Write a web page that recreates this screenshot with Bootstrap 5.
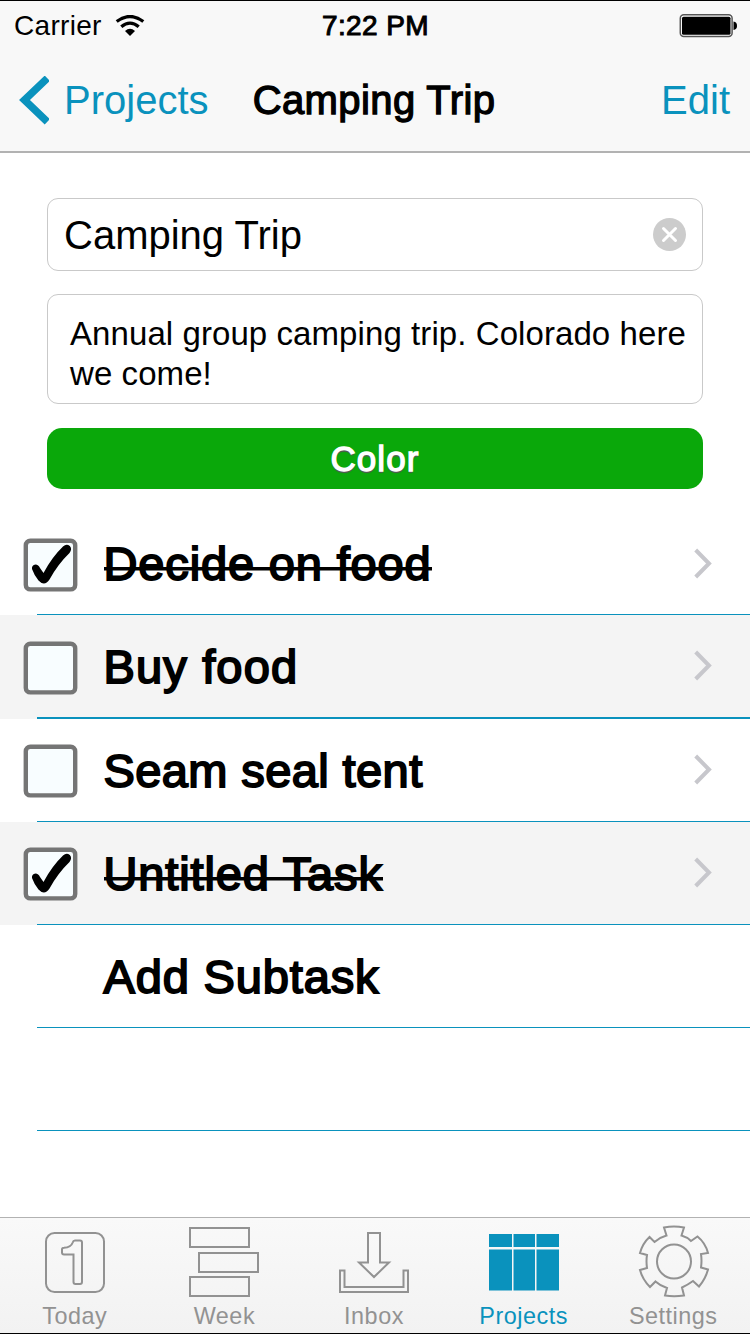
<!DOCTYPE html>
<html lang="en">
<head>
<meta charset="utf-8">
<meta name="viewport" content="width=device-width, initial-scale=1">
<title>Camping Trip</title>
<link href="https://cdn.jsdelivr.net/npm/bootstrap@5.3.0/dist/css/bootstrap.min.css" rel="stylesheet">
<style>
  :root { --tint: #0a92bd; }
  body { font-family: "Liberation Sans", Arial, sans-serif; color: #000; background: #fff; }
  svg { display: block; flex: none; }
  .screen { height: 1334px; border-top: 1px solid #000; border-bottom: 1px solid #000; overflow: hidden; }
  .top-area { height: 152px; background: #f8f8f8; border-bottom: 2px solid #b2b2b2; }
  .status { height: 49px; font-size: 28px; line-height: 49px; letter-spacing: .3px; padding: 0 13px 0 14px; }
  .side { flex: 1 1 0; }
  .medium { -webkit-text-stroke: 1.3px currentColor; }
  .clock { letter-spacing: .4px; -webkit-text-stroke-width: 1px; }
  .wifi { margin-left: 13px; }
  .title-row { height: 101px; font-size: 40px; line-height: 101px; padding: 0 20px 0 19px; }
  .title-row a { color: var(--tint); text-decoration: none; }
  .back-label { margin-left: 15px; }
  .title { letter-spacing: .4px; margin-left: -1px; }
  .form-area { padding: 45px 47px 0; }
  .field { border: 1px solid #c9c9c9; border-radius: 11px; }
  .name-field { height: 73px; font-size: 40px; line-height: 73px; padding: 0 16px 0 16px; margin-bottom: 23px; }
  .name-field span { padding-top: 2px; }
  .note-field { height: 110px; font-size: 33px; line-height: 40px; letter-spacing: .08px; padding: 19px 0 0 22px; margin-bottom: 24px; white-space: nowrap; }
  .color-btn { height: 61px; border-radius: 15px; background: #0aa80a; border: 0; color: #fff; font-size: 35px; line-height: 61px; letter-spacing: 1.1px; padding: 0; text-shadow: 0 2px 1px #555; }
  .tasks { margin-top: 23px; }
  .task { height: 103px; padding: 0 38px 0 21px; font-size: 47px; letter-spacing: .85px; background: #fff; position: relative; }
  .task:nth-child(2) { height: 104px; }
  .task:nth-child(even):nth-child(-n+4) { background: #f4f4f4; }
  .task::after { content: ""; position: absolute; left: 37px; right: 0; bottom: 0; height: 1px; background: var(--tint); }
  .task:nth-child(2)::after { height: 2px; }
  .box-icon { margin-top: 2px; }
  .task:nth-child(n+3) .box-icon { margin-top: 1px; }
  .chev-icon { margin-top: -1px; }
  .task:nth-child(n+2) .chev-icon { margin-top: -3px; }
  .task-name { margin-left: 23.5px; line-height: 60px; -webkit-text-stroke-width: 1.9px; }
  .wide { letter-spacing: 1.15px; }
  .tight { letter-spacing: .4px; }
  .done { display: inline-block; background: linear-gradient(#000, #000) 0 33px / 100% 3.5px no-repeat; }
  .tabs { height: 116px; border-top: 1px solid #b2b2b2; background: linear-gradient(#f9f9f9, #f2f2f2); color: #929292; font-size: 23.4px; letter-spacing: .5px; padding-right: 2px; }
  .tab { flex: 1 1 0; color: inherit; text-decoration: none; }
  .tab svg { margin-top: 5px; }
  .tab span { line-height: 28px; margin-top: 3px; }
  .tab.active { color: var(--tint); }
</style>
</head>
<body>
<svg width="0" height="0" class="position-absolute" aria-hidden="true">
  <defs>
    <g id="box">
      <rect x="4.800" y="4.800" width="49.400" height="48.600" rx="4.500" fill="#f8fdff" stroke="#757575" stroke-width="4.400"/>
    </g>
    <path id="tick" d="M11 33 Q10.500 29 14.500 28.500 Q17.500 28.500 19 32 L22.500 37 Q31 21 42 10.500 Q45.500 7.500 48.800 10 Q51.500 13 48.500 17 Q37 28 28.500 43.500 Q23.500 51 17.500 44.500 Q13.500 40 11 33Z"/>
    <path id="chev" d="M1.700 2 L15 15.500 L1.700 29" fill="none" stroke="#c7c7cc" stroke-width="4"/>
  </defs>
</svg>
<div class="screen d-flex flex-column">
  <header class="top-area flex-shrink-0">
    <div class="status d-flex align-items-center">
      <div class="side d-flex align-items-center">Carrier
        <svg class="wifi" width="30" height="22" viewBox="0 0 30 22"><path d="M1.700 6.500 Q15 -3.500 28.300 6.500" fill="none" stroke="#000" stroke-width="3.300"/><path d="M6.300 11.700 Q15 4.500 23.700 11.700" fill="none" stroke="#000" stroke-width="3.300"/><path d="M10 16 Q15 11.500 20 16 L15 21Z"/></svg>
      </div>
      <div class="medium clock">7:22 PM</div>
      <div class="side d-flex justify-content-end">
        <svg width="58" height="24" viewBox="0 0 58 24"><rect x="1.300" y=".8" width="51.800" height="21.800" rx="3.500" fill="#fff" stroke="#555" stroke-width="1.500"/><rect x="3" y="2.700" width="48.500" height="18" rx="1.500"/><path d="M54.500 7.500 Q58 8 58 11.700 Q58 15.500 54.500 16Z"/></svg>
      </div>
    </div>
    <nav class="title-row d-flex align-items-center">
      <a href="#" class="side d-flex align-items-center">
        <svg width="30" height="50" viewBox="0 0 30 50"><path d="M28.300 2.300 L5.500 24 L28.300 45.700" fill="none" stroke="#0a92bd" stroke-width="7.500"/></svg>
        <span class="back-label">Projects</span>
      </a>
      <div class="medium title">Camping Trip</div>
      <a href="#" class="side text-end">Edit</a>
    </nav>
  </header>

  <main class="flex-grow-1">
    <div class="form-area">
      <div class="field name-field d-flex align-items-center justify-content-between">
        <span>Camping Trip</span>
        <svg width="33" height="33" viewBox="0 0 33 33"><circle cx="16.500" cy="16.500" r="16.500" fill="#ccc"/><path d="M10.500 10.500 L22.500 22.500 M22.500 10.500 L10.500 22.500" stroke="#fff" stroke-width="3" stroke-linecap="round"/></svg>
      </div>
      <div class="field note-field">Annual group camping trip. Colorado here<br>we come!</div>
      <button class="btn color-btn medium w-100 d-block">Color</button>
    </div>
    <div class="tasks">
      <div class="task d-flex align-items-center">
        <svg class="box-icon" width="59" height="58" viewBox="0 0 59 58"><use href="#box"/><use href="#tick"/></svg>
        <span class="task-name medium"><span class="done">Decide on food</span></span>
        <svg class="chev-icon ms-auto" width="18" height="31"><use href="#chev"/></svg>
      </div>
      <div class="task d-flex align-items-center">
        <svg class="box-icon" width="59" height="58" viewBox="0 0 59 58"><use href="#box"/></svg>
        <span class="task-name medium wide">Buy food</span>
        <svg class="chev-icon ms-auto" width="18" height="31"><use href="#chev"/></svg>
      </div>
      <div class="task d-flex align-items-center">
        <svg class="box-icon" width="59" height="58" viewBox="0 0 59 58"><use href="#box"/></svg>
        <span class="task-name medium tight">Seam seal tent</span>
        <svg class="chev-icon ms-auto" width="18" height="31"><use href="#chev"/></svg>
      </div>
      <div class="task d-flex align-items-center">
        <svg class="box-icon" width="59" height="58" viewBox="0 0 59 58"><use href="#box"/><use href="#tick"/></svg>
        <span class="task-name medium"><span class="done">Untitled Task</span></span>
        <svg class="chev-icon ms-auto" width="18" height="31"><use href="#chev"/></svg>
      </div>
      <div class="task d-flex align-items-center">
        <svg width="59" height="58"></svg>
        <span class="task-name medium">Add Subtask</span>
      </div>
      <div class="task"></div>
    </div>
  </main>

  <nav class="tabs d-flex flex-shrink-0">
    <a href="#" class="tab d-flex flex-column align-items-center">
      <svg width="76" height="76" viewBox="0 0 76 76" fill="none" stroke="#929292" stroke-width="2"><rect x="9" y="10" width="58" height="59" rx="8.500"/><path d="M36.500 31.500 H27 Q25 31.500 25 29.500 V26.500 Q25 24.700 27 24.700 Q34 24.500 35.700 19.500 Q36.200 17.500 38 17.500 H43 Q45 17.500 45 19.500 V59 Q45 61 43 61 H38.500 Q36.500 61 36.500 59Z"/></svg>
      <span>Today</span>
    </a>
    <a href="#" class="tab d-flex flex-column align-items-center">
      <svg width="76" height="76" viewBox="0 0 76 76" fill="none" stroke="#929292" stroke-width="2"><path d="M4 5H63V24H4ZM13 30H72V49H13ZM4 54H63V73H4Z"/></svg>
      <span>Week</span>
    </a>
    <a href="#" class="tab d-flex flex-column align-items-center">
      <svg width="76" height="76" viewBox="1 0 76 76" fill="none" stroke="#929292" stroke-width="2"><path d="M33 10H45V39.500H54L39 54L24 39.500H33ZM5 47.500H9.500V64H68.500V47.500H73V69H5Z"/></svg>
      <span>Inbox</span>
    </a>
    <a href="#" class="tab active d-flex flex-column align-items-center">
      <svg width="76" height="76" viewBox="1 0 76 76" fill="#0a92bd"><path d="M4 11H27V24H4ZM28.500 11H50V24H28.500ZM51.500 11H74V24H51.500ZM4 26.500H27V67.500H4ZM28.500 26.500H50V67.500H28.500ZM51.500 26.500H74V67.500H51.500Z"/></svg>
      <span>Projects</span>
    </a>
    <a href="#" class="tab d-flex flex-column align-items-center">
      <svg width="76" height="76" viewBox="-.5 0 76 76" fill="none" stroke="#929292" stroke-width="2"><circle cx="38.500" cy="38.500" r="17"/><path d="M28.500 4.500 Q38.500 2.500 48.500 4.500 L46 12.500 Q51.500 14 55.500 18 L62 13.500 Q70 20 72.500 30 L65.500 31 Q66.500 38 65.500 44.500 L72.500 46.500 Q70 56 63.500 63.500 L57.500 58 Q52 62 46.500 64.500 L48.500 72.500 Q38.500 74 29.500 72.500 L31.500 65 Q25 63 20 58.500 L14.500 64 Q7 56.500 4.500 47 L11.500 45 Q10.500 38 11.500 32 L4.500 30 Q7 20.500 14 14 L19 19 Q25 14 31 12.500Z"/></svg>
      <span>Settings</span>
    </a>
  </nav>
</div>
<script src="https://cdn.jsdelivr.net/npm/bootstrap@5.3.0/dist/js/bootstrap.bundle.min.js"></script>
</body>
</html>
